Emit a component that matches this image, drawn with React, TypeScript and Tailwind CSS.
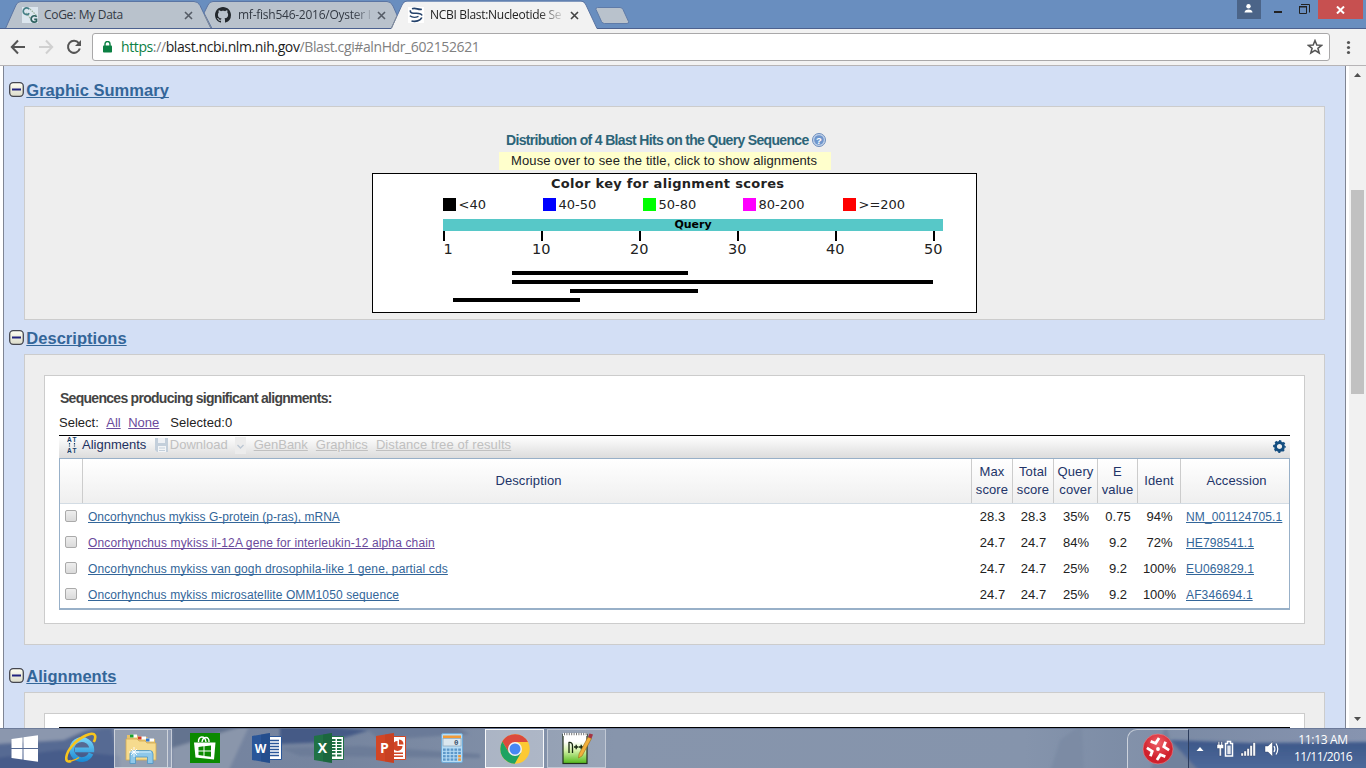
import React from "react";
import type { ReactNode } from "react";

const ui = "font-['Open_Sans',sans-serif]";

/* ---------- Browser chrome ---------- */

function TabShapes() {
  return (
    <svg className="absolute left-0 top-0" width="1366" height="29" viewBox="0 0 1366 29">
      <path d="M212 28.5 L204 13 L208 5 Q209.500 1.500 213 1.500 H387 Q391 1.500 393 6 L403 28.500 Z" fill="#b9c2cc" stroke="#5b75a3" />
      <path d="M5.500 28.500 L16 5 Q17.500 1.500 21 1.500 H194 Q198 1.500 200 5.500 L211 28.500 Z" fill="#b9c2cc" stroke="#5b75a3" />
      <path d="M204.500 15 L211 28" stroke="#848c98" fill="none" />
      <path d="M0 28.500 H1366" stroke="#4c618f" />
      <path d="M391 29.500 L402 5 Q403.500 1.500 407 1.500 H581 Q584.500 1.500 586 5 L597 28.500 V30 H391 Z" fill="#f2f2f2" />
      <path d="M391.500 28 L402 5 Q403.500 1 407 1 H581 Q584.500 1 586 5 L597 28.500" fill="none" stroke="#5b75a3" />
      <path d="M391.500 28 L397 15.500" stroke="#848c98" fill="none" />
      <path d="M597.500 7.500 H620 Q622 7.500 623 9.500 L628.500 21.500 Q629 23.500 627 23.500 H604.500 Q602.500 23.500 601.500 21.500 L596 9.500 Q595.500 7.500 597.500 7.500Z" fill="#b9c2cc" stroke="#5f7ba8" />
    </svg>
  );
}

function CloseX({ color }: { color: string }) {
  return (
    <svg width="9" height="9" viewBox="0 0 9 9" className="shrink-0">
      <path d="M1 1 L8 8 M8 1 L1 8" stroke={color} strokeWidth="1.6" />
    </svg>
  );
}

function CogeIcon() {
  return (
    <svg width="16" height="16" viewBox="0 0 16 16" className="shrink-0">
      <rect width="16" height="16" fill="#dce6ee" />
      <path d="M4 6 L9 12 M8 2 L15 9" stroke="#9bb39c" strokeWidth="1.200" strokeDasharray="1.500 1" />
      <path d="M7.200 2.300 A3.300 3.300 0 1 0 7.200 6.200" stroke="#457f86" strokeWidth="1.700" fill="none" />
      <path d="M14.700 9.800 A3.200 3.200 0 1 0 14.500 14.300 V12.300 H12.200" stroke="#2f6260" strokeWidth="1.700" fill="none" />
    </svg>
  );
}

function GithubIcon() {
  return (
    <svg width="16" height="16" viewBox="0 0 16 16" className="shrink-0" fill="#23282d">
      <path d="M8 0C3.580 0 0 3.580 0 8c0 3.540 2.290 6.530 5.470 7.590.4.070.55-.17.55-.38 0-.19-.01-.82-.01-1.490-2.010.37-2.530-.49-2.690-.94-.09-.23-.48-.94-.82-1.130-.28-.15-.68-.52-.01-.53.63-.01 1.080.58 1.230.82.72 1.210 1.870.87 2.330.66.070-.52.28-.87.51-1.070-1.780-.2-3.640-.89-3.640-3.950 0-.87.31-1.590.82-2.150-.08-.2-.36-1.020.08-2.120 0 0 .67-.21 2.200.82.64-.18 1.320-.27 2-.27s1.360.09 2 .27c1.530-1.040 2.200-.82 2.200-.82.44 1.100.16 1.920.08 2.120.51.56.82 1.270.82 2.150 0 3.070-1.870 3.750-3.650 3.950.29.25.54.73.54 1.480 0 1.070-.01 1.930-.01 2.200 0 .21.15.46.55.38A8.010 8.010 0 0 0 16 8c0-4.420-3.580-8-8-8z" />
    </svg>
  );
}

function NcbiIcon() {
  return (
    <svg width="16" height="16" viewBox="0 0 16 16" className="shrink-0">
      <rect width="16" height="16" fill="#fff" />
      <g fill="none" stroke="#24426b">
        <path d="M4 1.800 C8 .3 10 3.200 13.800 2.200" strokeWidth="1.600" />
        <path d="M2.500 3.200 C1.500 6.300 5 6.300 8.500 6.300 C12 6.300 13.500 6.800 14 8.500" strokeWidth="1.500" />
        <path d="M1.800 8.800 C4.500 10.800 8 10.500 10.500 9.300" strokeWidth="1.300" />
        <path d="M3.500 14 C7.500 15 12.500 14 13.800 10.500" strokeWidth="1.700" />
      </g>
    </svg>
  );
}

function TitleBar() {
  return (
    <header className={`relative h-[29px] shrink-0 bg-[#698ebf] text-[12px] ${ui}`}>
      <TabShapes />
      <div className="relative flex h-[29px] items-start">
        <div className="ml-[22px] flex h-[30px] w-[190px] items-center">
          <CogeIcon />
          <span className="ml-[6px] w-[140px] whitespace-nowrap tracking-[-0.3px] text-[#333a44]">CoGe: My Data</span>
          <CloseX color="#555c66" />
        </div>
        <div className="ml-[3px] flex h-[30px] w-[190px] items-center">
          <GithubIcon />
          <span className="ml-[7px] w-[139px] whitespace-nowrap tracking-[-0.25px] text-[#333a44] [mask-image:linear-gradient(to_right,black_115px,transparent_136px)]">
            mf-fish546-2016/Oyster I
          </span>
          <CloseX color="#555c66" />
        </div>
        <div className="ml-[3px] flex h-[30px] w-[190px] items-center">
          <NcbiIcon />
          <span className="ml-[6px] w-[140px] whitespace-nowrap tracking-[-0.3px] text-[#222] [mask-image:linear-gradient(to_right,black_108px,transparent_136px)]">
            NCBI Blast:Nucleotide Se
          </span>
          <CloseX color="#444" />
        </div>
        <div className="ml-auto flex h-[19px] items-stretch">
          <div className="flex w-6 items-center justify-center bg-[#4b6488]">
            <svg width="10" height="9" viewBox="0 0 10 9" fill="#fff" className="-mt-[3px]">
              <circle cx="4.500" cy="2.300" r="2.200" />
              <path d="M.5 8.500 C.5 4.500 8.500 4.500 8.500 8.500 Z" />
            </svg>
          </div>
          <svg width="57" height="19" viewBox="0 0 57 19">
            <rect x="13" y="11" width="8" height="2" fill="#222" />
            <path d="M38.500 7 h7 v6.500 h-7 z M38 6.500 h8" fill="none" stroke="#222" />
            <path d="M40 4.500 h8.500 v8" fill="none" stroke="#222" />
          </svg>
          <div className="mr-[3px] flex w-[45px] items-center justify-center bg-[#c75050]">
            <svg width="9" height="8" viewBox="0 0 9 8"><path d="M1 .5 L8 7.500 M8 .5 L1 7.500" stroke="#fff" strokeWidth="2" /></svg>
          </div>
        </div>
      </div>
    </header>
  );
}

function AddressBar() {
  return (
    <div className="flex h-[37px] shrink-0 items-start border-b border-[#b6b4b6] bg-[#f2f2f2] pt-1">
      <svg width="92" height="28" viewBox="0 0 92 28" fill="none" strokeWidth="2">
        <path d="M12 14 H25 M18 7.500 L11.800 14 L18 20.500" stroke="#555" />
        <path d="M39 14 H52 M46 7.500 L52.200 14 L46 20.500" stroke="#d0d0d0" />
        <path d="M78.800 10.200 A6 6 0 1 0 79.800 15.500" stroke="#555" />
        <path d="M81 7 V13 H75 Z" fill="#555" />
      </svg>
      <div className="flex h-7 w-[1238px] items-center rounded-[3px] border border-[#a9a8a9] bg-white">
        <svg width="9" height="12" viewBox="0 0 9 12" className="ml-[10px]">
          <rect y="4.500" width="9" height="7" rx=".8" fill="#0b8043" />
          <path d="M2 5 V3 a2.500 2.500 0 0 1 5 0 V5" fill="none" stroke="#0b8043" strokeWidth="1.400" />
        </svg>
        <span className={`ml-[9px] whitespace-nowrap text-[14px] leading-[26px] tracking-[-0.39px] text-[#808080] ${ui}`}>
          <span className="text-[#0b8043]">https</span>://<span className="text-[#1c1c1c]">blast.ncbi.nlm.nih.gov</span>/Blast.cgi#alnHdr_602152621
        </span>
        <svg width="16" height="16" viewBox="0 0 16 16" className="ml-auto mr-[6px]">
          <path d="M8 1.500 L9.800 6 L14.600 6.300 L10.900 9.300 L12.200 14 L8 11.300 L3.800 14 L5.100 9.300 L1.400 6.300 L6.200 6 Z" fill="none" stroke="#555" strokeWidth="1.500" />
        </svg>
      </div>
      <svg width="36" height="28" viewBox="0 0 36 28" fill="#555">
        <circle cx="18.500" cy="9.500" r="1.600" /><circle cx="18.500" cy="14.500" r="1.600" /><circle cx="18.500" cy="19.500" r="1.600" />
      </svg>
    </div>
  );
}

/* ---------- Page ---------- */

function Heading({ children, className }: { children: ReactNode; className: string }) {
  return (
    <div className={`flex h-6 shrink-0 items-start pl-[5px] ${className}`}>
      <svg width="15" height="15" viewBox="0 0 15 15">
        <defs>
          <linearGradient id="knob" x1="0" y1="0" x2="0" y2="1">
            <stop offset="0" stopColor="#fffef2" /><stop offset="1" stopColor="#dcdccb" />
          </linearGradient>
        </defs>
        <rect x=".7" y=".7" width="13.600" height="13.600" rx="3.500" fill="url(#knob)" stroke="#44464f" strokeWidth="1.300" />
        <rect x="3" y="6.500" width="9" height="2" fill="#23247f" />
      </svg>
      <h2 className="ml-[2.300px] text-[16.500px] font-bold leading-[17px] tracking-[0.03px] text-[#336699] underline decoration-1 underline-offset-[1px] [text-decoration-skip-ink:none]">
        {children}
      </h2>
    </div>
  );
}

function ScoreChart() {
  const keys: [string, string][] = [["#000", "<40"], ["#00f", "40-50"], ["#0f0", "50-80"], ["#f0f", "80-200"], ["#f00", ">=200"]];
  const ticks = [1, 10, 20, 30, 40, 50];
  const hits = [[139, 315], [139, 560], [197, 325], [80, 207]];
  return (
    <div className="ml-[347px] mt-[3px] h-[140px] w-[605px] border border-black bg-white">
      <svg width="603" height="138" viewBox="0 0 603 138" fontFamily="'DejaVu Sans', sans-serif" fill="#222">
        <text x="294.500" y="14" textAnchor="middle" fontWeight="700" fontSize="13" textLength="233">Color key for alignment scores</text>
        {keys.map(([fill, label], i) => (
          <g key={label}>
            <rect x={70 + i * 100} y="24" width="13" height="13" fill={fill} />
            <text x={85.500 + i * 100} y="35" fontSize="13">{label}</text>
          </g>
        ))}
        <rect x="70" y="45" width="500" height="12" fill="#57c8c8" />
        <text x="320" y="54" textAnchor="middle" fontWeight="700" fontSize="11" fill="#000">Query</text>
        {ticks.map((t, i) => (
          <g key={t}>
            <rect x={70 + i * 98} y="57" width="2" height="10" fill="#000" />
            <text x={i === 0 ? 75 : 70 + i * 98 + 0.3} y="80" textAnchor="middle" fontSize="14.500">{t}</text>
          </g>
        ))}
        {hits.map(([a, b], i) => (
          <rect key={i} x={a} y={97 + i * 9} width={b - a} height="4" fill="#000" />
        ))}
      </svg>
    </div>
  );
}

function GraphicPanel() {
  return (
    <section className="ml-5 flex h-[214px] w-[1301px] shrink-0 flex-col border border-[#ccc] bg-[#eee]">
      <div className="ml-[481px] mt-[24px] flex h-[18px] items-center">
        <h3 className="whitespace-nowrap text-[14px] font-bold leading-[18px] tracking-[-0.670px] text-[#2c6478]">
          Distribution of 4 Blast Hits on the Query Sequence
        </h3>
        <svg width="14" height="14" viewBox="0 0 14 14" className="ml-[3px]">
          <circle cx="7" cy="7" r="6.500" fill="#c3d3ea" stroke="#6c8dbd" />
          <circle cx="7" cy="7" r="4.800" fill="#6f96cc" />
          <text x="7" y="10.500" textAnchor="middle" fontSize="9.500" fontWeight="700" fill="#fff" fontFamily="'Liberation Sans', sans-serif">?</text>
        </svg>
      </div>
      <p className="ml-[474px] mt-[3px] h-[18px] w-[332px] whitespace-nowrap bg-[#ffffcc] pl-3 text-[13px] leading-[17px] tracking-[0.12px] text-[#222]">
        Mouse over to see the title, click to show alignments
      </p>
      <ScoreChart />
    </section>
  );
}

const columns = "grid grid-cols-[23px_889px_41px_41px_44px_40px_43px_108px]";

const rows = [
  ["Oncorhynchus mykiss G-protein (p-ras), mRNA", "28.3", "28.3", "35%", "0.75", "94%", "NM_001124705.1"],
  ["Oncorhynchus mykiss il-12A gene for interleukin-12 alpha chain", "24.7", "24.7", "84%", "9.2", "72%", "HE798541.1"],
  ["Oncorhynchus mykiss van gogh drosophila-like 1 gene, partial cds", "24.7", "24.7", "25%", "9.2", "100%", "EU069829.1"],
  ["Oncorhynchus mykiss microsatellite OMM1050 sequence", "24.7", "24.7", "25%", "9.2", "100%", "AF346694.1"],
];

const titleTracking = ["tracking-[0.010px]", "tracking-[0.140px]", "tracking-[0.120px]", "tracking-[0.110px]"];
const link = "text-[12px] underline decoration-1 underline-offset-[1px] [text-decoration-skip-ink:none]";

function ResultsToolbar() {
  const off = "text-[#c0c0c0] underline decoration-1 underline-offset-[1px]";
  return (
    <div className="flex h-[23px] items-start border-t border-black bg-gradient-to-b from-white to-[#dcdcdc] text-[13px] leading-[18px]">
      <svg width="12" height="16" viewBox="0 0 12 16" className="ml-[8px] mt-px" fontFamily="'Liberation Sans', sans-serif" fontWeight="700" fontSize="6.500" fill="#16406b">
        <text x="0" y="5">A</text><text x="5.500" y="5">T</text>
        <text x="0" y="15.500">A</text><text x="5.500" y="15.500">T</text>
        <path d="M2.500 6 V9.500 M7.500 6 V9.500" stroke="#16406b" strokeDasharray="1.500 1" strokeWidth="1.200" />
      </svg>
      <span className="ml-[3px] text-[#1d3161]">Alignments</span>
      <svg width="13" height="14" viewBox="0 0 13 14" className="ml-[9px] mt-[2px]">
        <path d="M0 0 H13 V14 H2 L0 12 Z" fill="#c3cfdb" />
        <rect x="3" y="0" width="7" height="5" fill="#eef1f5" /><rect x="3" y="8" width="8" height="6" fill="#f3f5f7" />
        <path d="M4 10 h6 M4 12.500 h6" stroke="#c3cfdb" />
      </svg>
      <span className="ml-[1.500px] text-[#c0c0c0]">Download</span>
      <svg width="11" height="17" viewBox="0 0 11 17" className="ml-[7px] mt-px">
        <rect width="11" height="17" fill="#ececec" /><path d="M2.500 8 L5.500 11 L8.500 8" fill="none" stroke="#bcc7d3" strokeWidth="1.400" />
      </svg>
      <span className={`ml-[8px] ${off}`}>GenBank</span>
      <span className={`ml-[8px] ${off}`}>Graphics</span>
      <span className={`ml-[8px] tracking-[0.1px] ${off}`}>Distance tree of results</span>
      <svg width="13" height="13" viewBox="-6.500 -6.500 13 13" className="ml-auto mr-[4px] mt-1">
        <circle r="4" fill="none" stroke="#144e80" strokeWidth="2.800" />
        <circle r="5.500" fill="none" stroke="#144e80" strokeWidth="1.800" strokeDasharray="2.160 2.160" strokeDashoffset="1.080" />
      </svg>
    </div>
  );
}

function ResultsTable() {
  const heads = ["", "Description", "Max score", "Total score", "Query cover", "E value", "Ident", "Accession"];
  return (
    <div className="border border-b-2 border-[#98b0c8]">
      <div className={`${columns} h-[45px] border-b border-[#d3dce4] bg-gradient-to-b from-white to-[#efefef] text-[13px] leading-[18px] text-[#223468]`}>
        {heads.map((h, i) => (
          <div key={i} className={`flex items-center justify-center border-r border-[#ccc] text-center tracking-[0.1px] last:border-r-0 ${i === 1 || i === 7 ? "pl-[3px]" : ""}`}>
            {i > 1 && h.includes(" ") ? <span>{h.split(" ")[0]}<br />{h.split(" ")[1]}</span> : h}
          </div>
        ))}
      </div>
      {rows.map((r, i) => (
        <div key={r[0]} className={`${columns} h-[26px] items-center text-[13px] leading-[20px] text-[#222]`}>
          <input type="checkbox" className="-mt-[2px] ml-[5px] h-[12px] w-[12px] appearance-none rounded-[2px] border border-[#aaa] bg-gradient-to-b from-[#eee] to-[#dadada]" />
          <a className={`${link} ${titleTracking[i]} ml-[5px] justify-self-start ${i === 1 ? "text-[#6b4a9c]" : "text-[#336699]"}`}>{r[0]}</a>
          {r.slice(1, 6).map((v, j) => (
            <span key={j} className="text-center">{v}</span>
          ))}
          <a className={`${link} ml-[5px] justify-self-start tracking-[0.130px] text-[#336699]`}>{r[6]}</a>
        </div>
      ))}
    </div>
  );
}

function DescriptionsPanel() {
  return (
    <section className="ml-5 h-[291px] w-[1301px] shrink-0 border border-[#ccc] bg-[#eee] px-[19px] pt-5">
      <div className="h-[249px] w-[1261px] border border-[#ccc] bg-white px-[14px] pt-[13px]">
        <h3 className="pl-[1px] text-[14px] font-bold leading-[18px] tracking-[-0.720px] text-[#444]">Sequences producing significant alignments:</h3>
        <p className="mt-[7px] flex h-[21px] text-[13px] leading-[18px] text-[#222]">
          Select:
          <a className="ml-[7.500px] text-[#6b4a9c] underline underline-offset-1">All</a>
          <a className="ml-[7.500px] text-[#6b4a9c] underline underline-offset-1">None</a>
          <span className="ml-[11px] tracking-[0.050px]">Selected:0</span>
        </p>
        <ResultsToolbar />
        <ResultsTable />
      </div>
    </section>
  );
}

function ScrollBar() {
  return (
    <div className="flex w-[17px] flex-col items-center bg-[#f1f1f1]">
      <svg width="17" height="17" viewBox="0 0 17 17"><path d="M5 11 L8.500 7 L12 11 Z" fill="#505050" /></svg>
      <div className="mt-[107px] h-[204px] w-[13px] bg-[#c1c1c1]" />
      <svg width="17" height="17" viewBox="0 0 17 17" className="mt-auto"><path d="M5 6 L8.500 10 L12 6 Z" fill="#505050" /></svg>
    </div>
  );
}

/* ---------- Taskbar ---------- */

function Wallpaper() {
  return (
    <svg className="absolute inset-0" width="1366" height="40" viewBox="0 0 1366 40" preserveAspectRatio="none">
      <defs>
        <linearGradient id="sky" x1="0" x2="1" y1="0" y2="0">
          <stop offset="0" stopColor="#8591aa" /><stop offset=".1" stopColor="#7483a0" /><stop offset=".25" stopColor="#76859f" />
          <stop offset=".45" stopColor="#8795ac" /><stop offset=".75" stopColor="#8594ac" /><stop offset=".85" stopColor="#7a8aa4" /><stop offset="1" stopColor="#8794b0" />
        </linearGradient>
        <linearGradient id="band" x1="0" x2="0" y1="0" y2="1"><stop offset="0" stopColor="#3c5688" /><stop offset="1" stopColor="#4f6c9c" /></linearGradient>
        <filter id="soft"><feGaussianBlur stdDeviation="1.500" /></filter>
      </defs>
      <rect width="1366" height="40" fill="url(#sky)" />
      <g filter="url(#soft)">
        <path d="M-4 16 L50 8 L104 0 H112 L120 44 H-4 Z" fill="#566a93" />
        <path d="M-4 30 L60 22 L120 28 V44 H-4 Z" fill="#465b8a" />
        <path d="M-4 -4 H100 L64 12 L-4 16 Z" fill="#8b97ae" />
        <path d="M172 -4 H240 L215 28 L172 40 Z" fill="#64738f" />
        <path d="M172 20 L250 -4 L228 44 H172 Z" fill="#8a96ab" />
        <path d="M280 -4 L370 2 L330 14 L280 16 Z" fill="#455a86" />
        <path d="M280 20 L360 18 L480 26 V30 L300 28 Z" fill="#6c7c98" />
        <path d="M360 -4 H450 L470 6 L380 12 Z" fill="#6a7a98" />
        <path d="M1060 12 L1082 -4 L1084 44 H1050 Z" fill="#7c8ba4" />
        <path d="M1170 12 L1250 15 L1370 14 V44 H1170 Z" fill="url(#band)" />
        <path d="M1166 -4 L1170 12 L1200 44 H1150 Z" fill="#6a7b98" />
      </g>
      <rect width="1366" height="1" fill="#5f6f90" opacity=".7" />
    </svg>
  );
}

function OfficeIcon({ letter, color, dark, kind }: { letter: string; color: string; dark: string; kind: "word" | "excel" | "ppt" }) {
  return (
    <svg width="30" height="30" viewBox="0 0 30 30">
      <path d="M15 3.500 H29.500 V26.500 H15 Z" fill="#fff" stroke={color} />
      {kind === "word" && <path d="M18 7.500 h9 M18 10.500 h9 M18 13.500 h9 M18 16.500 h9 M18 19.500 h9 M18 22.500 h9" stroke={color} strokeWidth="1.300" />}
      {kind === "excel" && <path d="M18 7 h3.500 M23 7 h4.500 M18 10 h3.500 M23 10 h4.500 M18 13 h3.500 M23 13 h4.500 M18 16 h3.500 M23 16 h4.500 M18 19 h3.500 M23 19 h4.500 M18 22.500 h3.500 M23 22.500 h4.500" stroke={color} strokeWidth="1.900" />}
      {kind === "ppt" && (
        <g fill={color}>
          <path d="M21.500 8 V13 H26.500 A5 5 0 1 1 21.500 8 Z" /><path d="M23 6.500 A5 5 0 0 1 27.500 11.500 H23 Z" />
          <path d="M18 19.500 h9 v1.500 h-9 z M18 22.500 h9 v1.500 h-9 z" />
        </g>
      )}
      <path d="M0 3 L18 0 V30 L0 27 Z" fill={color} />
      <path d="M9 1.500 L18 0 V30 L9 28.500 Z" fill={dark} opacity=".35" />
      <text x="8.500" y="19.500" textAnchor="middle" fontFamily="'Open Sans', sans-serif" fontWeight="700" fontSize={kind === "word" ? 12 : 14} fill="#fff">{letter}</text>
    </svg>
  );
}

function WindowsIcon() {
  return (
    <svg width="28" height="27" viewBox="0 0 28 27" fill="#fff" className="ml-[11px]">
      <path d="M.5 4 L11.500 2.500 V13 H.5 Z M12.500 2.300 L27 .3 V13 H12.500 Z M.5 14 H11.500 V24.500 L.5 23 Z M12.500 14 H27 V26.700 L12.500 24.700 Z" />
    </svg>
  );
}

function IEIcon() {
  return (
    <svg width="32" height="32" viewBox="0 0 32 32" className="ml-[26px]">
      <defs><linearGradient id="ie" gradientUnits="userSpaceOnUse" x1="0" y1="4" x2="0" y2="30"><stop offset="0" stopColor="#83dcfb" /><stop offset="1" stopColor="#1687d3" /></linearGradient></defs>
      <path d="M26 21.500 A10 10 0 1 1 26.800 17.800 H10" fill="none" stroke="url(#ie)" strokeWidth="4.800" />
      <path d="M6 29 C-1 32 0 22 7 14 C15 4.500 28 -1 30 3.500 C30.800 5.500 29.800 8 28.800 10" fill="none" stroke="#f8c51d" strokeWidth="2.600" />
      <path d="M6 29 C10 28.500 12 27 14 25.500" fill="none" stroke="#f5b81a" strokeWidth="1.300" />
    </svg>
  );
}

function ExplorerIcon() {
  return (
    <svg width="32" height="32" viewBox="0 0 32 32">
      <path d="M2 9 V2 H12 L14 4 H22 L24 6 H30 V10 Z" fill="#e6c26a" />
      <path d="M5 1.500 h7 v3 h-7z M13 3.500 h8 v3 h-8z M21 5.500 h8 v3 h-8z" fill="#fff" />
      <path d="M5 1.500 h3.500 v3 h-3.500z" fill="#19a02d" /><path d="M13 3.500 h3.500 v3 h-3.500z" fill="#d33b26" /><path d="M21 5.500 h3.500 v3 h-3.500z" fill="#3479d0" />
      <path d="M1 6 H12 L14 8 H20 L22 10 H31 V27 H1 Z" fill="#f6db8e" stroke="#d4ab50" strokeWidth=".8" />
      <path d="M5 30.500 V21 Q5 17.500 8.500 17.500 H24.500 Q28 17.500 28 21 V30.500 H22.500 V24 H10.500 V30.500 Z" fill="#8ec8ea" stroke="#4d95c4" strokeWidth=".8" />
      <path d="M7 19 H26" stroke="#d5f0fd" /><path d="M9 14 V24 M4 19 H14 M6 16 L12 22 M12 16 L6 22" stroke="#fff" strokeWidth=".9" />
    </svg>
  );
}

function StoreIcon() {
  return (
    <svg width="30" height="30" viewBox="0 0 30 30">
      <rect width="30" height="30" fill="#0b8a00" />
      <path d="M4 9.500 L25.500 9.500 L24 26.500 L5.500 24.500 Z" fill="#fff" />
      <path d="M8.500 9 C8 2.500 15 2 16 9 M12 9 C13 3 19.500 3 19 9" stroke="#fff" strokeWidth="1.400" fill="none" />
      <path d="M8.500 14 L13.500 13.300 V17.600 H8.500 Z M14.500 13.200 L21 12.400 V17.600 H14.500 Z M8.500 18.500 H13.500 V22.800 L8.500 22 Z M14.500 18.500 H21 V23.700 L14.500 22.900 Z" fill="#0b8a00" />
    </svg>
  );
}

function CalculatorIcon() {
  const cells = [0, 1, 2, 3, 4];
  return (
    <svg width="22" height="30" viewBox="0 0 22 30">
      <rect x=".5" y=".5" width="21" height="29" rx="1.500" fill="#b7dcf5" stroke="#6fa9d6" />
      <rect x="2" y="2.500" width="18" height="2.500" fill="#f29b38" />
      <rect x="2" y="5.500" width="18" height="7.500" fill="#dbe7ef" stroke="#8aa4b8" strokeWidth=".7" />
      <text x="13" y="12" fontFamily="'Liberation Mono', monospace" fontSize="7.500" fontWeight="700" fill="#37506b">0</text>
      {cells.map((c) => [0, 1, 2, 3].map((r) => (
        <rect key={`${c}-${r}`} x={2 + c * 3.800} y={15.500 + r * 3.300} width="2.700" height="2.300" fill={c === 4 && r > 1 ? "#ef9430" : "#5c97c9"} />
      )))}
    </svg>
  );
}

function ChromeIcon() {
  return (
    <svg width="30" height="30" viewBox="-15 -15 30 30">
      <circle r="14.700" fill="#fcc934" />
      <path d="M0 -7 H12.900 A14.700 14.700 0 0 0 -12.700 -7.400 L-6.100 3.500 Z" fill="#dc4a3d" />
      <path d="M-12.700 -7.400 A14.700 14.700 0 0 0 -.3 14.700 L6.100 3.500 L-6.100 3.500 Z" fill="#1ea362" />
      <circle r="7" fill="#f1f1f1" /><circle r="5.500" fill="#4587f3" />
    </svg>
  );
}

function NotepadIcon() {
  return (
    <svg width="32" height="33" viewBox="0 0 32 33">
      <defs><linearGradient id="npp" x1="0" y1="0" x2="0" y2="1"><stop offset=".25" stopColor="#fff" /><stop offset=".55" stopColor="#d4f2a8" /><stop offset="1" stopColor="#53b81a" /></linearGradient></defs>
      <rect x="2" y="2.500" width="24" height="29" fill="url(#npp)" stroke="#20301c" strokeWidth="1.200" />
      <path d="M2 2.500 H26" stroke="#fff" strokeWidth="3" /><path d="M3 2 H26" stroke="#777" strokeWidth="2.500" strokeDasharray="1 1.400" />
      <path d="M8 21 V10.500 Q11.500 10 11.500 14 V21" fill="none" stroke="#15250f" strokeWidth="1.300" />
      <path d="M13 15 h4.500 M15.200 12.800 v4.500 M18 15 h4.500 M20.200 12.800 v4.500" fill="none" stroke="#15250f" strokeWidth="1.300" />
      <path d="M27 5 L30.500 6.500 L21 24 L17.500 26 L18 22 Z" fill="#f2b03c" stroke="#9a6a18" strokeWidth=".6" />
      <path d="M27 5 L28.500 1.500 L32 2.500 L30.500 6.500 Z" fill="#a43442" />
    </svg>
  );
}

function TrayIcons() {
  return (
    <svg width="101" height="40" viewBox="0 0 101 40" fill="#fff">
      <path d="M7.500 23 L11 19 L14.500 23 Z" />
      <g stroke="#29385a" strokeWidth=".4">
        <path d="M28 16.500 h1.200 v-3 h1.400 v3 h1.400 v-3 h1.400 v3 h1.200 v4 h-2.300 V28 h-2 v-7.500 h-2.300z" />
        <path d="M36.500 15.500 h2 v-2 h3 v2 h2 V28 h-7z" fill="none" stroke="#fff" strokeWidth="1.500" />
        <path d="M38.300 17.500 h3.400 v8.700 h-3.400z" fill="#fff" stroke="none" opacity=".85" />
        <path d="M52 25 h2.400 v3 h-2.400z M55 23 h2.400 v5 h-2.400z M58 20.500 h2.400 V28 h-2.400z M61 17.500 h2.400 V28 h-2.400z M64 14.500 h2.400 V28 h-2.400z" />
        <path d="M76 18 h3 l4.500 -4.500 V28.500 L79 24 h-3 z" />
      </g>
      <path d="M85 18 q1.800 3 0 6 M87 15.500 q3.500 5.500 0 11" fill="none" stroke="#fff" strokeWidth="1.200" />
    </svg>
  );
}

function Taskbar() {
  return (
    <footer className="relative h-10 shrink-0">
      <Wallpaper />
      <div className="relative flex h-10 items-center">
        <WindowsIcon />
        <IEIcon />
        <div className="ml-[17px] flex h-[39px] w-[54px] items-center justify-center self-end border border-white/55 bg-[#9ea7b6]/75"><ExplorerIcon /></div>
        <div className="mr-[18px] h-[39px] w-[4px] self-end border-y border-r border-white/50 bg-white/20" />
        <StoreIcon />
        <div className="ml-[32px]"><OfficeIcon letter="W" color="#2a5699" dark="#1b3f78" kind="word" /></div>
        <div className="ml-[32px]"><OfficeIcon letter="X" color="#207245" dark="#145230" kind="excel" /></div>
        <div className="ml-[32px]"><OfficeIcon letter="P" color="#d24625" dark="#b83a1c" kind="ppt" /></div>
        <div className="ml-[35px]"><CalculatorIcon /></div>
        <div className="ml-[22px] flex h-[39px] w-[59px] items-center justify-center self-end border border-white/90 bg-white/35"><ChromeIcon /></div>
        <div className="ml-[3px] flex h-[39px] w-[59px] items-center justify-center self-end border border-white/40 bg-white/15"><NotepadIcon /></div>
        <div className="ml-auto flex h-[39px] w-[62px] items-center justify-center self-end rounded-tl-[10px] border-l border-r border-t border-l-white/60 border-r-[#2c3c5c] border-t-white/50 bg-white/5">
          <svg width="32" height="32" viewBox="-16 -16 32 32">
            <defs><radialGradient id="orb" cy=".3"><stop offset="0" stopColor="#f0626a" /><stop offset="1" stopColor="#d0202c" /></radialGradient></defs>
            <circle r="15" fill="url(#orb)" stroke="#e8868b" strokeWidth=".6" />
            <g fill="none" stroke="#fff" strokeWidth="2.800">
              {[20, 110, 200, 290].map((a) => (
                <path key={a} d="M-2.800 -10.800 L-4.200 -4.600 L-9.500 -4.600" transform={`rotate(${a})`} />
              ))}
            </g>
            <circle r="1.900" fill="#fff" />
          </svg>
        </div>
        <TrayIcons />
        <div className={`mr-[10px] w-[66px] text-center text-[12px] leading-[17px] text-white ${ui}`}>
          <div className="whitespace-nowrap tracking-[-0.35px]">11:13 AM</div>
          <div className="whitespace-nowrap tracking-[-0.55px]">11/11/2016</div>
        </div>
      </div>
    </footer>
  );
}

export default function App() {
  return (
    <div className="flex h-[768px] w-[1366px] flex-col overflow-hidden bg-white font-['Liberation_Sans',Arial,sans-serif]">
      <TitleBar />
      <AddressBar />
      <div className="flex h-[662px] shrink-0 overflow-hidden">
        <main className="ml-[3px] mr-[3px] flex w-[1343px] flex-col overflow-hidden border-l border-r border-[#7f8594] bg-[#d3dff5]">
          <Heading className="mt-4">Graphic Summary</Heading>
          <GraphicPanel />
          <Heading className="mt-[10px]">Descriptions</Heading>
          <DescriptionsPanel />
          <Heading className="mt-[23px]">Alignments</Heading>
          <section className="ml-5 h-[60px] w-[1301px] shrink-0 border border-[#ccc] bg-[#eee] px-[19px] pt-5">
            <div className="h-[60px] w-[1261px] border border-[#ccc] bg-white px-[14px] pt-[13px]">
              <div className="border-t border-black" />
            </div>
          </section>
        </main>
        <ScrollBar />
      </div>
      <Taskbar />
    </div>
  );
}
